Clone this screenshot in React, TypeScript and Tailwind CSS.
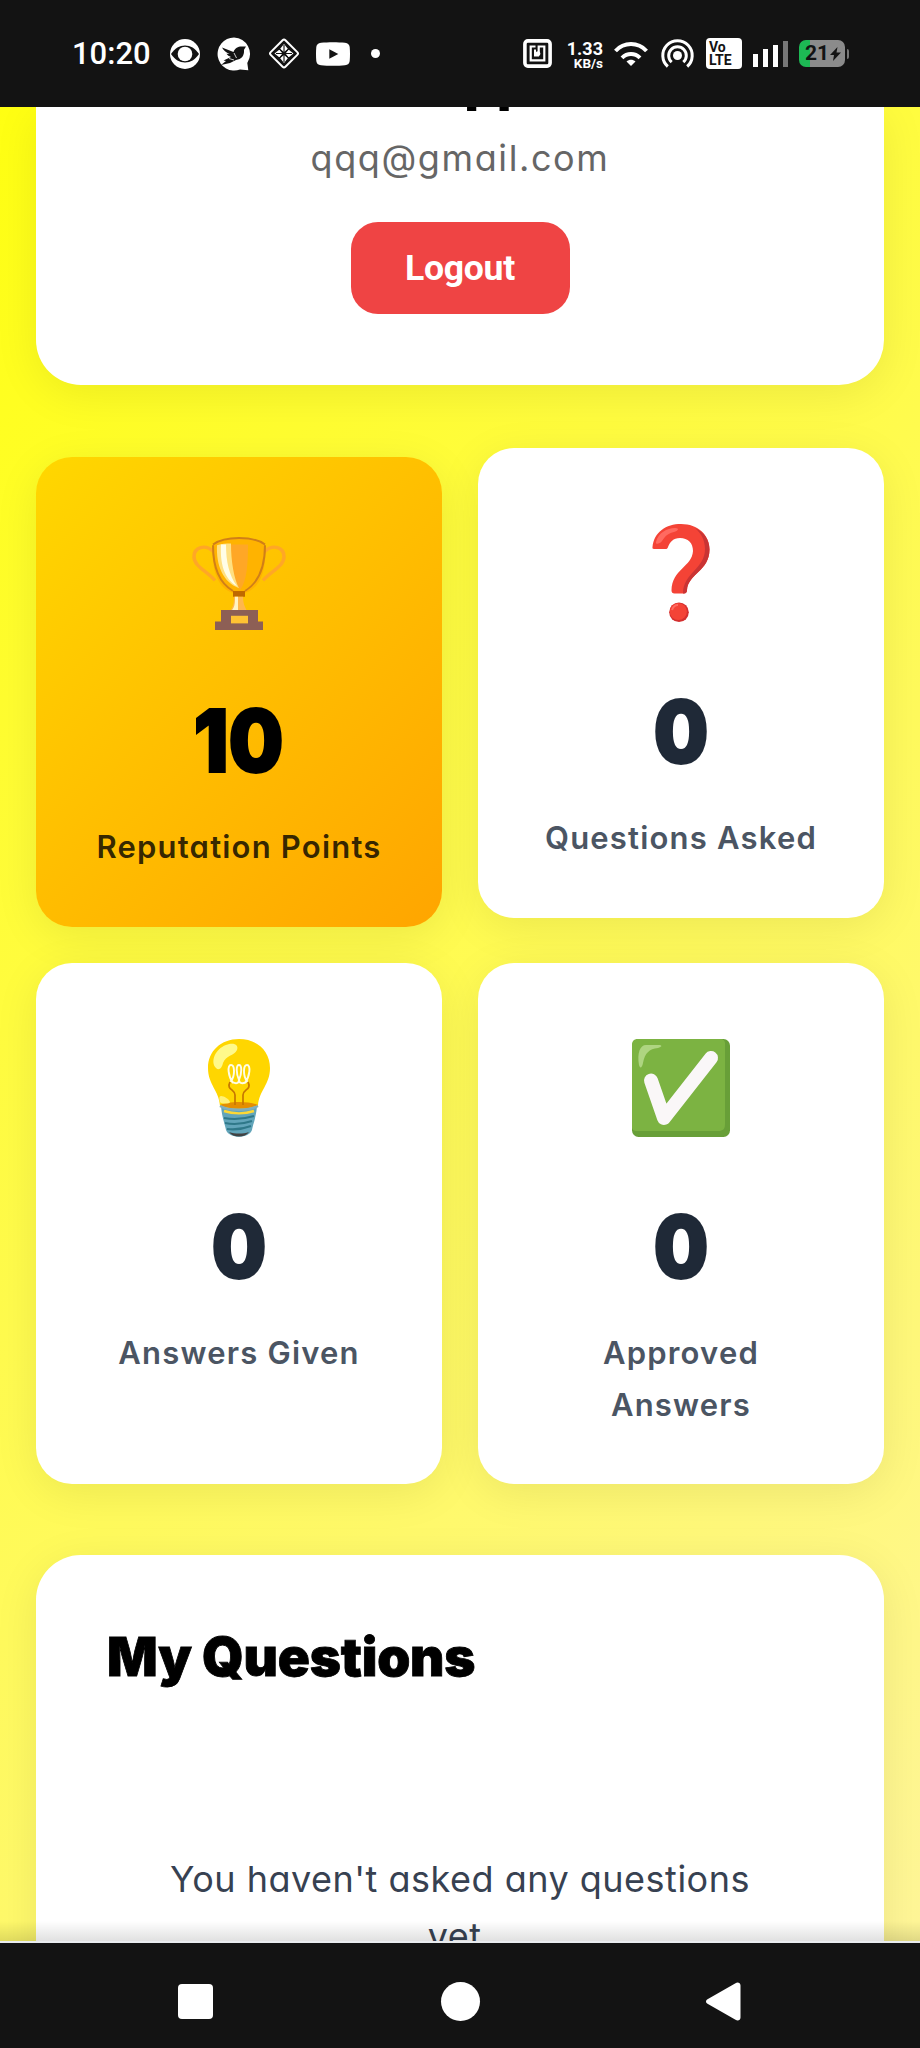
import type { ReactNode } from 'react'

interface StatCardProps {
  icon: ReactNode
  value: number
  label: string
  variant?: 'plain' | 'gold' | 'raised'
}

function EyeIcon() {
  return (
    <svg className="h-[30px] w-[30px]" viewBox="0 0 30 30">
      <circle cx="15" cy="15" r="15" fill="#fff" />
      <path d="M1 15C5 9.2 9.500 6.500 15 6.500S25 9.200 29 15C25 20.800 20.500 23.500 15 23.500S5 20.800 1 15Z" fill="#131313" />
      <circle cx="15" cy="15" r="7.300" fill="#fff" />
    </svg>
  )
}

function BirdIcon() {
  return (
    <svg className="h-[34px] w-[34px]" viewBox="0 0 34 34">
      <path d="M17 .5a16.500 16.500 0 1 0 6 31.900l8.300.9-1-7.400A16.500 16.500 0 0 0 17 .5Z" fill="#fff" />
      <path d="m5 10.500 11.500 4.500c1.500-4 4.500-5.500 8-5.500h4.500l-2 3.300c.5 6-2.500 9.700-8 10.200L13 26l-9 2 5-4-2.500-.5L14 20c-2-.7-3.500-1.700-4.500-3.200l3 .2c-3.500-1.500-6-3.500-7.500-6.500Z" fill="#131313" />
      <path d="m17 16 2.500 5M12 21.500l5 1.500" stroke="#fff" strokeWidth=".8" />
    </svg>
  )
}

function DiamondIcon() {
  return (
    <svg className="h-[33px] w-[32px]" viewBox="0 0 32 33" fill="none">
      <rect x="5.600" y="6.100" width="20.800" height="20.800" rx="2" transform="rotate(45 16 16.500)" stroke="#fff" strokeWidth="2" />
      <path d="m16 7 4 5-4 3-4-3 4-5Zm0 19 4-5-4-3-4 3 4 5ZM6.500 16.500l5-4 3 4-3 4-5-4Zm19 0-5-4-3 4 3 4 5-4Z" fill="#fff" />
      <path d="m11 11.500 10 10m0-10-10 10M16 8v17M8 16.500h16" stroke="#131313" strokeWidth="1.100" />
    </svg>
  )
}

function YoutubeIcon() {
  return (
    <svg className="h-6 w-[34px]" viewBox="0 0 34 24">
      <path d="M5 .7C12 0 22 0 29 .7c3 .3 4.500 2 4.700 4.300.4 5 .4 9 0 14-.2 2.300-1.700 4-4.700 4.300-7 .7-17 .7-24 0C2 23 .5 21.300.3 19c-.4-5-.4-9 0-14C.5 2.700 2 1 5 .7Z" fill="#fff" />
      <path d="m13.300 7.300 9 4.700-9 4.700Z" fill="#131313" />
    </svg>
  )
}

function NfcIcon() {
  return (
    <svg className="h-[29px] w-[29px]" viewBox="0 0 29 29" fill="none" stroke="#fff">
      <rect x="1.900" y="1.900" width="25.200" height="25.200" rx="3" strokeWidth="3.600" />
      <path d="M12.500 7.500H7.700v13.800h13.600V7.500h-5.600v6" strokeWidth="2.200" />
      <path d="M12 10.500v6h4" strokeWidth="2" />
      <circle cx="15" cy="14.700" r="2.400" fill="#fff" stroke="none" />
    </svg>
  )
}

function WifiIcon() {
  return (
    <svg className="h-6 w-[34px]" viewBox="0 0 34 24" fill="none" stroke="#fff" strokeWidth="4">
      <path d="M1.500 9C10-.2 24-.2 32.500 9" />
      <path d="M8 15.800c5.200-5.200 12.800-5.200 18 0" />
      <path d="m12.500 19.500c2.700-2.300 6.300-2.300 9 0L17 24Z" fill="#fff" stroke="none" />
    </svg>
  )
}

function HotspotIcon() {
  return (
    <svg className="h-[29px] w-[33px]" viewBox="0 0 33 29" fill="none" stroke="#fff" strokeWidth="3">
      <circle cx="16.500" cy="16.500" r="4.500" fill="#fff" stroke="none" />
      <path d="M6.800 27.500a14.700 14.700 0 1 1 19.400 0" />
      <path d="M10.700 23.200a8.800 8.800 0 1 1 11.600 0" />
    </svg>
  )
}

function TrophyIcon() {
  return (
    <svg className="h-[98px] w-[98px]" viewBox="0 -3 98 103" preserveAspectRatio="none" fill="none">
      <path d="M24 17C15 8 4 12 4 22c0 10 13 15 21 25M74 17c9-9 20-5 20 5 0 10-13 15-21 25" stroke="#ffa726" strokeWidth="3.500" />
      <path d="M23 9C35 1 63 1 75 9c2 22-3 46-20 51H43C26 55 21 31 23 9Z" fill="#ffb300" />
      <path d="M41 9h17c0 20-1 38-8 48-7-10-9-28-9-48Z" fill="#ffa726" />
      <path d="M27 10c5-2 9-2 14-2 0 19 3 37 8 47C33 49 26 31 27 10Z" fill="#ffe082" />
      <path d="M31 9h5c0 18 3 32 11 44C34 45 30 29 31 9Z" fill="#fffde7" />
      <path d="M23 10c0 22 5 39 20 48m32-48c0 22-6 39-20 48M23 9c12-9 40-9 52 0" stroke="#d07f18" strokeWidth="2" />
      <path d="M43 58h12v6H43Z" fill="#bf6900" />
      <path d="M44 64h9c0 7 2 11 4 15H40c3-4 4-8 4-15Z" fill="#ffb74d" />
      <path d="M45 64h3v14h-6c3-4 3-8 3-14Z" fill="#fff3c4" />
      <path d="M31 78h37v12h5v9H25v-9h6Z" fill="#8d5f55" />
      <path d="M41 84h17v8H41Z" fill="#ffc233" />
    </svg>
  )
}

function QuestionIcon() {
  return (
    <svg className="h-[98px] w-[98px]" viewBox="0 0 98 98" fill="none">
      <path d="M20.500 23C22 8 34 0 49 0c17 0 28.500 11 28.500 25.500C77.500 47 56 50 55 66c0 2-1 3.500-3 3.500H42.500c-2 0-3-1-3-3C40 45 60 43 61 27c0-8-5-13-13-13-7 0-10 4-12 9-.5 1.500-1 2-2.500 2H22c-1.500 0-1.700-.7-1.500-2Z" fill="#f44336" />
      <path d="M63 4c9 4 14.500 11.500 14.500 21.500C77.500 47 56 50 55 66c0 2-1 3.500-3 3.500h-1C51 49 73 45 73 25c0-9-4-16-10-21Z" fill="#c93434" />
      <path d="M24 18c2-9 11-14 19-14 5 0 3 3-1 4-8 2-9 5-12 9-2 3-7 4-6 1Z" fill="#ff6a60" />
      <circle cx="47" cy="88.200" r="9.800" fill="#d32f2f" />
      <circle cx="46.300" cy="87.500" r="8.600" fill="#f44336" />
      <path d="M40 86c1-3 3-5 6-5" stroke="#ff6a60" strokeWidth="2" />
    </svg>
  )
}

function BulbIcon() {
  return (
    <svg className="h-[98px] w-[98px]" viewBox="0 0 98 98" fill="none">
      <path d="M31 67h36c-1 12-4 18-5 24-3 9-23 9-26 0-1-6-4-12-5-24Z" fill="#62a5ba" />
      <path d="M49 0c18 0 31 12 31 29 0 17-11 22-12 38-7 5-31 5-38 0C29 51 18 46 18 29 18 12 31 0 49 0Z" fill="#ffd600" />
      <path d="M30 66c8-4 30-4 38 0-9 5-29 5-38 0Z" fill="#e58e00" />
      <path d="M30 67c9 5 29 5 38 0" stroke="#82aebb" strokeWidth="2.500" />
      <path d="M34 72c9 3 21 3 30 0" stroke="#fdd835" strokeWidth="2.500" />
      <path d="M34 79c10 2 20 1 30-2M35 84c9 2 18 1 27-2M37 90c8 1 16 0 24-3" stroke="#2f7889" strokeWidth="2" />
      <path d="M39 93c6 2 14 2 20 0-4 6-16 6-20 0Z" fill="#424242" />
      <path d="M26 29c-6-6-1-19 10-23 8-3 13 0 11 5-3 6-11 5-14 13-1 5-4 8-7 5Z" fill="#fff98a" />
      <path d="M31 57c3 0 8 3 9 6 0 2-9 2-10 0-1-3-1-6 1-6Z" fill="#fff176" />
      <path d="M40 43c-4 8 5 7 5 13v10M58 43c4 8-5 7-5 13v10" stroke="#c67700" strokeWidth="1.700" />
      <path d="M43 44c-5-7-6-18-2-18s4 11 0 16c5 4 8 2 8-1-3-7-3-15 0-15s3 8 0 15c0 3 4 5 8 1-4-5-4-16 0-16s3 11-2 18" stroke="#fffde7" strokeWidth="1.900" />
    </svg>
  )
}

function CheckIcon() {
  return (
    <svg className="h-[98px] w-[98px]" viewBox="0 0 98 98" fill="none">
      <rect width="98" height="98" rx="6.500" fill="#689f38" />
      <path d="M6 0h82c4 0 5 2 5 5v80c0 5-2 7-7 7H5c-3 0-5-1-5-4V6c0-4 2-6 6-6Z" fill="#7cb342" />
      <path d="M7 26C5 14 8 6 14 6h12c5 0 4 2 0 3-9 1-13 5-15 15-1 5-3 6-4 2Z" fill="#aed581" />
      <path d="m19 41.500 13 37.500L79 19" stroke="#faf7f8" strokeWidth="14" strokeLinecap="round" strokeLinejoin="round" />
    </svg>
  )
}

function StatusBar() {
  return (
    <header className="flex h-[107px] shrink-0 items-center bg-[#131313] pl-[72px] font-[Roboto,sans-serif] text-white">
      <span className="w-[98px] text-[31px] font-medium leading-none">10:20</span>
      <div className="flex items-center">
        <EyeIcon />
        <div className="ml-[17px]"><BirdIcon /></div>
        <div className="ml-[17px]"><DiamondIcon /></div>
        <div className="ml-4"><YoutubeIcon /></div>
        <div className="ml-[21px] h-[9px] w-[9px] rounded-full bg-white" />
      </div>

      <div className="ml-[143px] flex items-center">
        <NfcIcon />
        <div className="ml-[12px] flex w-[39px] flex-col items-end pt-[2px]">
          <span className="text-[18px] font-bold leading-[17px]">1.33</span>
          <span className="text-[13.500px] font-bold leading-[13px]">KB/s</span>
        </div>
        <div className="ml-[11px]"><WifiIcon /></div>
        <div className="ml-[13px]"><HotspotIcon /></div>
        <div className="ml-[12px] flex h-[31px] w-9 flex-col justify-center rounded-[4px] bg-white pl-[3px] text-[14px] font-bold leading-[13px] text-[#131313]">
          <span>Vo</span>
          <span>LTE</span>
        </div>
        <div className="ml-[11px] flex h-[26px] items-end gap-[5px]">
          <div className="h-[13px] w-[5px] bg-white" />
          <div className="h-[18px] w-[5px] bg-white" />
          <div className="h-[22px] w-[5px] bg-white" />
          <div className="h-[26px] w-[5px] bg-[#777777]" />
        </div>
        <div className="ml-[11px] flex h-[27px] w-[46px] items-center rounded-[7px] bg-linear-to-r from-[#1db954] from-[25%] to-[#8b8b8b] to-[25%] pl-[6px] text-[#131313]">
          <span className="text-[21px] font-bold leading-none">21</span>
          <svg className="ml-px h-[14px] w-[11px]" viewBox="0 0 11 14">
            <path d="M7.500 0 0 8h4L3 14l8-8.500H6.500Z" fill="#131313" />
          </svg>
        </div>
        <div className="ml-[2px] h-[10px] w-[2px] rounded-r-full bg-[#777777]" />
      </div>
    </header>
  )
}

function StatCard({ icon, value, label, variant = 'plain' }: StatCardProps) {
  const surface = {
    plain: 'bg-white',
    gold: 'bg-[linear-gradient(135deg,#ffd700,#ffa500)]',
    raised: 'bg-white -translate-y-[9px]',
  }[variant]
  const isGold = variant === 'gold'

  return (
    <div className={`flex flex-col items-center rounded-[36px] px-[36px] pt-[76px] text-center shadow-[0_9px_45px_rgba(0,0,0,0.08)] ${surface}`}>
      {icon}
      <div className={`mt-[55px] scale-x-[0.89] text-[87px] font-black leading-[109px] [-webkit-text-stroke:2px] ${isGold ? 'text-black' : 'text-[#1f2937]'}`}>
        {value}
      </div>
      <div className={`mt-[26px] text-[31px] font-semibold leading-[52px] tracking-[1.2px] whitespace-pre-line ${isGold ? 'text-black/80' : 'text-[#4b5563]'}`}>
        {label}
      </div>
    </div>
  )
}

function NavigationBar() {
  return (
    <nav className="grid h-[105px] shrink-0 grid-cols-[302px_316px_302px] items-center bg-[#131313] pt-[11px]">
      <div className="ml-[178px] h-[35px] w-[35px] rounded-[4px] bg-white" />
      <div className="justify-self-center h-[39px] w-[39px] rounded-full bg-white" />
      <svg className="ml-[88px] h-[39px] w-[35px]" viewBox="0 0 35 39">
        <path d="M1.500 17.200 29.500 1.200c2.500-1.500 5 0 5 2.300v32c0 2.500-2.500 3.800-5 2.300l-28-16c-2-1.200-2-3.400 0-4.600Z" fill="#fff" />
      </svg>
    </nav>
  )
}

export default function App() {
  return (
    <div className="flex h-[2048px] w-[920px] flex-col overflow-hidden font-[Inter,sans-serif] [font-feature-settings:'cv11']">
      <StatusBar />

      <main className="relative h-[1834px] shrink-0 overflow-hidden bg-[linear-gradient(135deg,#ffff12,#fff698)] px-[36px]">
        <section className="flex h-[278px] flex-col items-center rounded-b-[45px] bg-white shadow-[0_9px_45px_rgba(0,0,0,0.08)]">
          <div className="flex h-[4px] items-end overflow-hidden pl-[73px]">
            <h1 className="text-[54px] font-extrabold leading-[50px] tracking-[-2px]">pp</h1>
          </div>
          <p className="mt-[19px] text-[36px] leading-[57px] tracking-[1.6px] text-[#666666]">qqq@gmail.com</p>
          <button className="mt-[35px] h-[92px] w-[219px] rounded-[27px] bg-[#ef4444] pt-px font-[Roboto,sans-serif] text-[35.600px] font-bold tracking-[-0.3px] text-white">
            Logout
          </button>
        </section>

        <section className="mt-[72px] grid grid-cols-2 grid-rows-[470px_521px] gap-x-[36px] gap-y-[36px]">
          <StatCard icon={<TrophyIcon />} value={10} label="Reputation Points" variant="gold" />
          <StatCard icon={<QuestionIcon />} value={0} label="Questions Asked" variant="raised" />
          <StatCard icon={<BulbIcon />} value={0} label="Answers Given" />
          <StatCard icon={<CheckIcon />} value={0} label={'Approved\nAnswers'} />
        </section>

        <section className="mt-[71px] h-[600px] rounded-t-[45px] bg-white px-[71px] pt-[70px] shadow-[0_9px_45px_rgba(0,0,0,0.08)]">
          <h2 className="text-[53px] font-black leading-[64px] tracking-[-0.2px] text-black [-webkit-text-stroke:0.8px]">My Questions</h2>
          <p className="mt-[162px] px-[45px] text-center text-[36px] leading-[57px] tracking-[0.5px] text-[#374151]">
            You haven't asked any questions yet.
          </p>
        </section>

        <div className="absolute inset-x-0 bottom-0 h-[20px] bg-linear-to-t from-black/12 to-transparent" />
      </main>

      <div className="h-[2px] shrink-0 bg-[#e9ecef]" />
      <NavigationBar />
    </div>
  )
}
